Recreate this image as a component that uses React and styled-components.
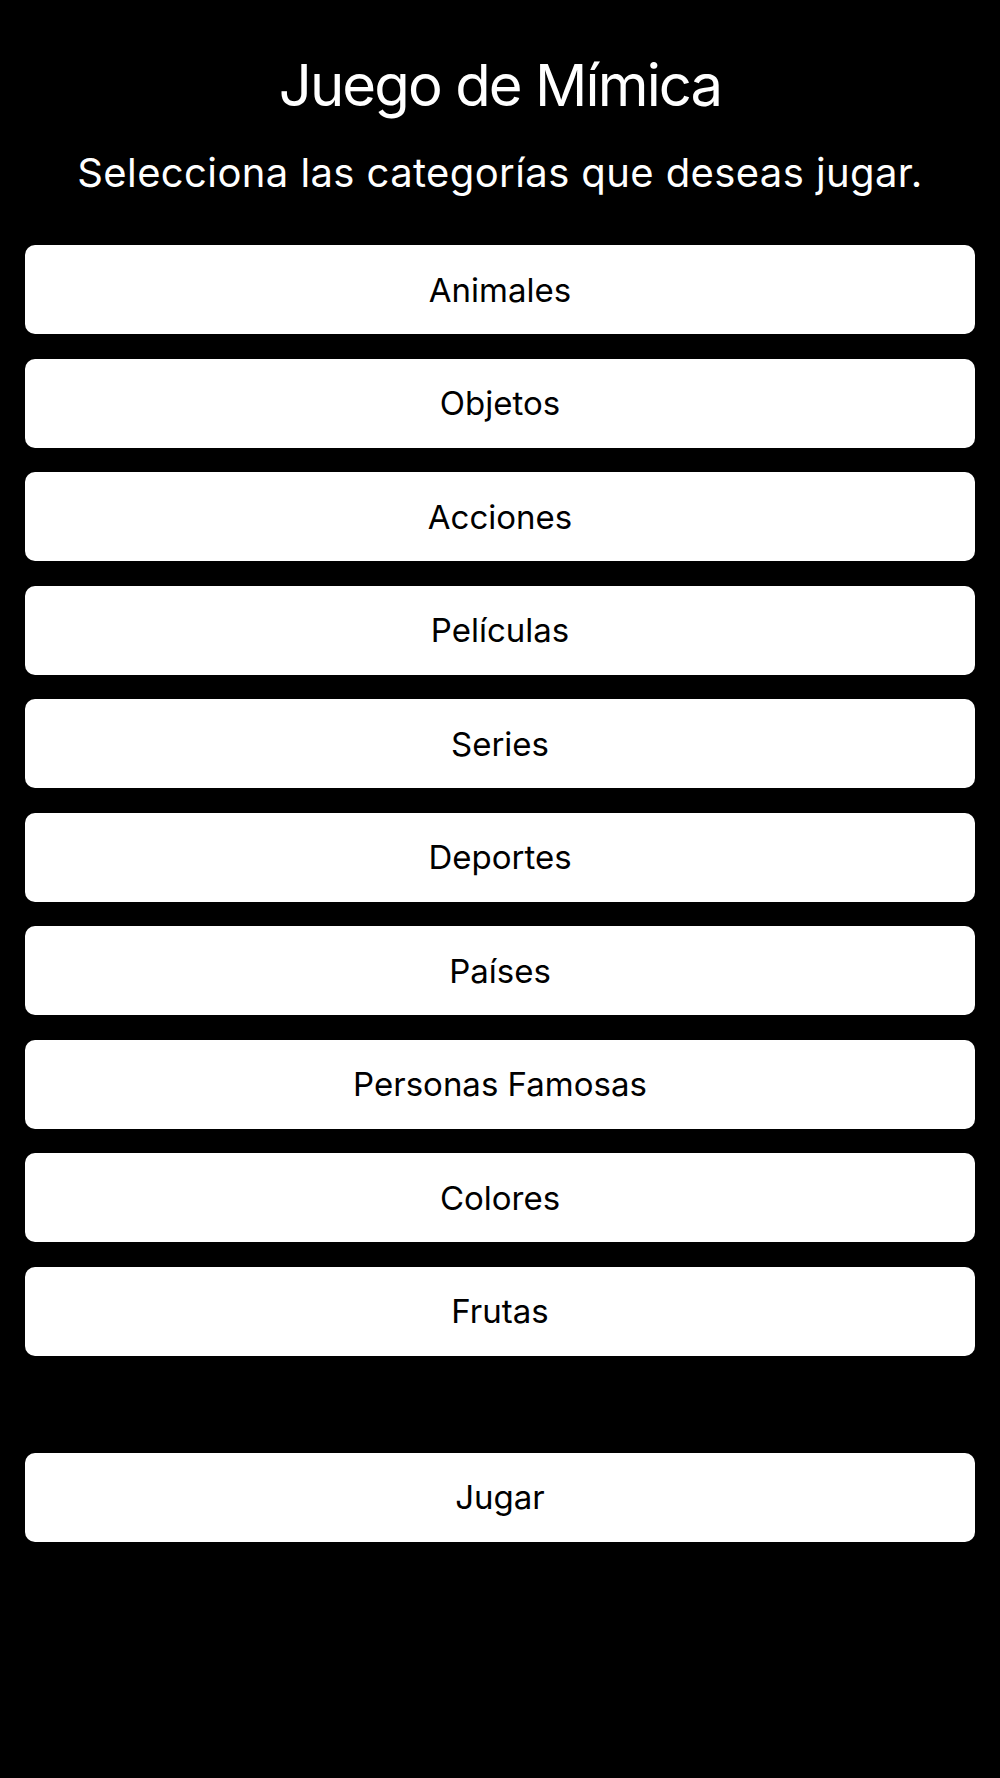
import React from "react";
import styled, { createGlobalStyle } from "styled-components";

const Global = createGlobalStyle`
  html, body { margin: 0; padding: 0; background: #000; }
  body { font-family: Inter, "Noto Sans", sans-serif; }
  #root { min-height: 1778px; background: #000; }
`;

const Screen = styled.main`
  display: flex;
  flex-direction: column;
  padding: 49px 25px 0;
  box-sizing: border-box;
  min-height: 1778px;
  background: #000;
`;

const Title = styled.h1`
  margin: 0;
  text-align: center;
  color: #fff;
  font-weight: 400;
  font-size: 58px;
  line-height: 72px;
  letter-spacing: -1.9px;
`;

const Subtitle = styled.p`
  margin: 27px 0 0;
  text-align: center;
  color: #fff;
  font-weight: 400;
  font-size: 40px;
  line-height: 50px;
  letter-spacing: 0.4px;
`;

const List = styled.div`
  display: flex;
  flex-direction: column;
  gap: 24.5px;
  margin-top: 47px;
`;

const OptionButton = styled.button`
  height: 89px;
  width: 100%;
  border: none;
  border-radius: 10px;
  background: #fff;
  color: #000;
  font-family: Inter, "Noto Sans", sans-serif;
  font-size: 33px;
  font-weight: 400;
  letter-spacing: 0;
  display: flex;
  align-items: center;
  justify-content: center;
  padding: 0;
  cursor: pointer;
`;

const PlayArea = styled.div`
  margin-top: 97px;
`;

const categories = [
  "Animales",
  "Objetos",
  "Acciones",
  "Películas",
  "Series",
  "Deportes",
  "Países",
  "Personas Famosas",
  "Colores",
  "Frutas",
];

export default function App() {
  return (
    <>
      <Global />
      <Screen>
        <Title>Juego de Mímica</Title>
        <Subtitle>Selecciona las categorías que deseas jugar.</Subtitle>
        <List>
          {categories.map((c) => (
            <OptionButton key={c}>{c}</OptionButton>
          ))}
        </List>
        <PlayArea>
          <OptionButton>Jugar</OptionButton>
        </PlayArea>
      </Screen>
    </>
  );
}
